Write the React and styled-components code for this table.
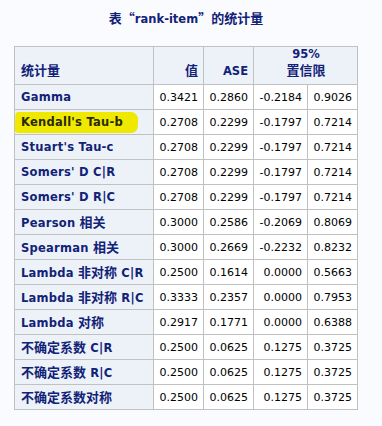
import React from 'react'
import styled, { createGlobalStyle } from 'styled-components'

const GlobalStyle = createGlobalStyle`
  html, body {
    margin: 0;
    padding: 0;
    background: #fafbfe;
  }
  body {
    font-family: "DejaVu Sans", "Noto Sans CJK SC", sans-serif;
  }
`

const StyledPage = styled.div`
  width: 382px;
  height: 426px;
  background: #fafbfe;
  padding: 9px 0 0 14px;
  box-sizing: border-box;
`

const StyledTitle = styled.div`
  width: 344px;
  text-align: center;
  font-size: 11.5px;
  font-weight: bold;
  color: #112277;
  height: 37px;
  line-height: 17px;
`

const StyledCjk = styled.span`
  font-family: "Noto Sans CJK SC", sans-serif;
  font-size: 13px;
  font-weight: bold;
  letter-spacing: 0;
`

const StyledTable = styled.table`
  border-collapse: collapse;
  border: 1px solid #c1c1c1;
  font-size: 11px;
  table-layout: fixed;
  col:nth-child(1) { width: 139px; }
  col:nth-child(2) { width: 50px; }
  col:nth-child(3) { width: 50px; }
  col:nth-child(4) { width: 54px; }
  col:nth-child(5) { width: 50px; }
`

const StyledHeadCell = styled.th`
  background: #edf2f9;
  color: #112277;
  font-weight: bold;
  font-size: 11.5px;
  border: 1px solid #c1c1c1;
  text-align: ${props => props.align || 'left'};
  vertical-align: bottom;
  padding: 0 5px 5px 6px;
  line-height: 15px;
  height: 38px;
  box-sizing: border-box;
  white-space: nowrap;
`

const StyledRowHead = styled.th`
  position: relative;
  background: #edf2f9;
  color: #112277;
  font-weight: bold;
  font-size: 11.5px;
  letter-spacing: 0.25px;
  text-align: left;
  border: 1px solid #c1c1c1;
  padding: 0 2px 0 6px;
  height: 24px;
  line-height: 16px;
  white-space: nowrap;
`

const StyledCellText = styled.span`
  position: relative;
  z-index: 1;
  color: ${props => (props.marked ? '#2a2a00' : '#112277')};
`

const StyledMarker = styled.span`
  position: absolute;
  left: 0;
  top: 2px;
  width: 123px;
  height: 21px;
  background: #efe900;
  border-radius: 3px 8px 6px 4px;
  transform: skewX(-3deg);
`

const StyledDataCell = styled.td`
  background: #fff;
  color: #000;
  border: 1px solid #c1c1c1;
  text-align: right;
  padding: 0 5px 0 0;
  height: 24px;
  white-space: nowrap;
`

const rows = [
  ['Gamma', '0.3421', '0.2860', '-0.2184', '0.9026'],
  ["Kendall's Tau-b", '0.2708', '0.2299', '-0.1797', '0.7214', true],
  ["Stuart's Tau-c", '0.2708', '0.2299', '-0.1797', '0.7214'],
  ["Somers' D C|R", '0.2708', '0.2299', '-0.1797', '0.7214'],
  ["Somers' D R|C", '0.2708', '0.2299', '-0.1797', '0.7214'],
  ['Pearson 相关', '0.3000', '0.2586', '-0.2069', '0.8069'],
  ['Spearman 相关', '0.3000', '0.2669', '-0.2232', '0.8232'],
  ['Lambda 非对称 C|R', '0.2500', '0.1614', '0.0000', '0.5663'],
  ['Lambda 非对称 R|C', '0.3333', '0.2357', '0.0000', '0.7953'],
  ['Lambda 对称', '0.2917', '0.1771', '0.0000', '0.6388'],
  ['不确定系数 C|R', '0.2500', '0.0625', '0.1275', '0.3725'],
  ['不确定系数 R|C', '0.2500', '0.0625', '0.1275', '0.3725'],
  ['不确定系数对称', '0.2500', '0.0625', '0.1275', '0.3725'],
]

// wrap the CJK runs so they get the larger CJK face
const Mixed = ({ text }) =>
  text.split(/([\u4e00-\u9fff“”]+)/).map((part, i) =>
    /[\u4e00-\u9fff“”]/.test(part) ? <StyledCjk key={i}>{part}</StyledCjk> : part
  )

export default function App() {
  return (
    <StyledPage>
      <GlobalStyle />
      <StyledTitle><Mixed text='表“rank-item”的统计量' /></StyledTitle>
      <StyledTable>
        <colgroup>
          <col /><col /><col /><col /><col />
        </colgroup>
        <thead>
          <tr>
            <StyledHeadCell><StyledCjk>统计量</StyledCjk></StyledHeadCell>
            <StyledHeadCell align='right'><StyledCjk>值</StyledCjk></StyledHeadCell>
            <StyledHeadCell align='right'>ASE</StyledHeadCell>
            <StyledHeadCell align='center' colSpan={2}>95%<br /><StyledCjk>置信限</StyledCjk></StyledHeadCell>
          </tr>
        </thead>
        <tbody>
          {rows.map(([name, v, ase, lo, hi, marked]) => (
            <tr key={name}>
              <StyledRowHead>
                {marked && <StyledMarker />}
                <StyledCellText marked={marked}><Mixed text={name} /></StyledCellText>
              </StyledRowHead>
              <StyledDataCell>{v}</StyledDataCell>
              <StyledDataCell>{ase}</StyledDataCell>
              <StyledDataCell>{lo}</StyledDataCell>
              <StyledDataCell>{hi}</StyledDataCell>
            </tr>
          ))}
        </tbody>
      </StyledTable>
    </StyledPage>
  )
}
